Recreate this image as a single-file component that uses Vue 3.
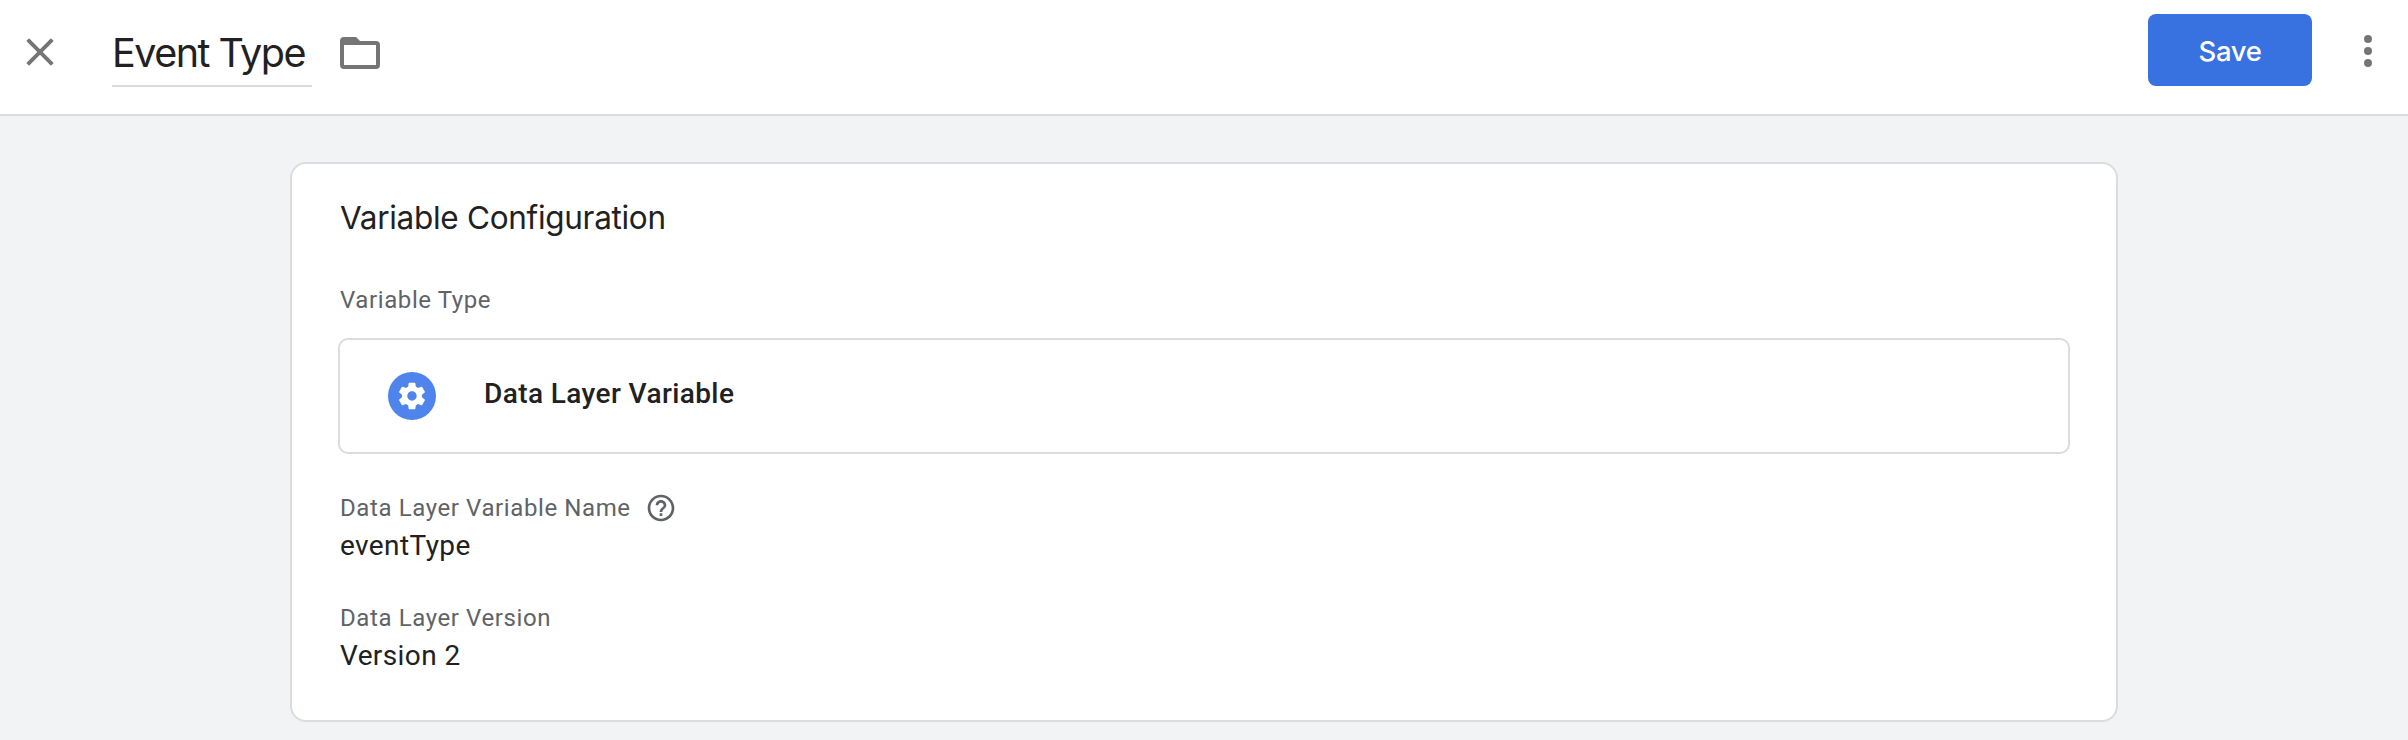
<script setup>
const fields = [
  { label: 'Data Layer Variable Name', value: 'eventType', help: true },
  { label: 'Data Layer Version', value: 'Version 2', help: false },
]
</script>

<template>
  <div class="page">
    <header class="bar">
      <button class="icon-btn close" aria-label="Close">
        <svg width="28" height="28" viewBox="0 0 28 28"><path d="M1.7 1.7 26.3 26.3M26.3 1.7 1.7 26.3" fill="none" stroke="#757575" stroke-width="3.9" /></svg>
      </button>
      <div class="title"><span>Event Type</span></div>
      <button class="icon-btn folder" aria-label="Folder">
        <svg width="40" height="32" viewBox="0 0 40 32"><path fill="#757575" fill-rule="evenodd" d="M4 0h12l4 4h16a4 4 0 0 1 4 4v20a4 4 0 0 1-4 4H4a4 4 0 0 1-4-4V4a4 4 0 0 1 4-4zM4 8v20h32V8z" /></svg>
      </button>
      <button class="save"><span>Save</span></button>
      <button class="icon-btn more" aria-label="More">
        <svg width="8" height="32" viewBox="0 0 8 32"><g fill="#757575"><circle cx="4" cy="4" r="4" /><circle cx="4" cy="16" r="4" /><circle cx="4" cy="28" r="4" /></g></svg>
      </button>
    </header>
    <main class="card">
      <h2><span>Variable Configuration</span></h2>
      <div class="label type-label"><span>Variable Type</span></div>
      <div class="type-box">
        <svg width="48" height="48" viewBox="0 0 48 48">
          <circle cx="24" cy="24" r="24" fill="#5084ed" />
          <path transform="translate(8 8) scale(1.3333)" fill="#fff" d="M19.43 12.98c.04-.32.07-.64.07-.98s-.03-.66-.07-.98l2.11-1.65c.19-.15.24-.42.12-.64l-2-3.46c-.12-.22-.39-.3-.61-.22l-2.49 1c-.52-.4-1.08-.73-1.69-.98l-.38-2.65C14.46 2.18 14.25 2 14 2h-4c-.25 0-.46.18-.49.42l-.38 2.65c-.61.25-1.17.59-1.69.98l-2.49-1c-.23-.09-.49 0-.61.22l-2 3.46c-.13.22-.07.49.12.64l2.11 1.65c-.04.32-.07.65-.07.98s.03.66.07.98l-2.11 1.65c-.19.15-.24.42-.12.64l2 3.46c.12.22.39.3.61.22l2.49-1c.52.4 1.08.73 1.69.98l.38 2.65c.03.24.24.42.49.42h4c.25 0 .46-.18.49-.42l.38-2.65c.61-.25 1.17-.59 1.69-.98l2.49 1c.23.09.49 0 .61-.22l2-3.46c.12-.22.07-.49-.12-.64l-2.11-1.65zM12 15.5c-1.93 0-3.5-1.57-3.5-3.5s1.57-3.5 3.5-3.5 3.5 1.57 3.5 3.5-1.57 3.5-3.5 3.5z" />
        </svg>
        <span class="type-name">Data Layer Variable</span>
      </div>
      <section v-for="f in fields" :key="f.label" class="field">
        <div class="label">
          <span>{{ f.label }}</span>
          <svg v-if="f.help" class="help" width="32" height="32" viewBox="0 0 24 24"><path fill="#5f6368" d="M11 18h2v-2h-2v2zm1-16C6.48 2 2 6.48 2 12s4.48 10 10 10 10-4.480 10-10S17.520 2 12 2zm0 18c-4.410 0-8-3.590-8-8s3.590-8 8-8 8 3.590 8 8-3.590 8-8 8zm0-14c-2.210 0-4 1.790-4 4h2c0-1.100.9-2 2-2s2 .9 2 2c0 2-3 1.750-3 5h2c0-2.250 3-2.500 3-5 0-2.210-1.790-4-4-4z" /></svg>
        </div>
        <div class="value"><span>{{ f.value }}</span></div>
      </section>
    </main>
  </div>
</template>

<style>
body { margin: 0; background: #f1f3f4; }
</style>

<style scoped>
.page {
  box-sizing: border-box;
  width: 100%;
  height: 740px;
  background: #f1f3f4;
  font-family: Roboto, sans-serif;
  color: #212121;
  overflow: hidden;
}
.bar {
  box-sizing: border-box;
  display: flex;
  align-items: flex-start;
  height: 116px;
  padding: 0 36px 0 26px;
  background: #fff;
  border-bottom: 2px solid #dadce0;
}
button { border: 0; padding: 0; margin: 0; background: none; }
.icon-btn svg, .type-box svg, .help { display: block; flex: none; }
.close { margin-top: 38px; }
.title {
  box-sizing: border-box;
  width: 200px;
  height: 87px;
  margin-left: 58px;
  padding-top: 29px;
  border-bottom: 2px solid #dadce0;
  font: 400 39.5px/48px Inter, sans-serif;
  letter-spacing: -1.5px;
  white-space: nowrap;
}
.folder { margin: 37px 0 0 28px; }
.save {
  box-sizing: border-box;
  width: 164px;
  height: 72px;
  margin: 14px 0 0 auto;
  padding-top: 2px;
  border-radius: 8px;
  background: #3871e0;
  color: #fff;
  font: 500 27.5px/70px Inter, sans-serif;
  letter-spacing: -0.4px;
}
.more { margin: 35px 0 0 52px; }
.card {
  box-sizing: border-box;
  width: 1828px;
  height: 560px;
  margin: 46px auto 0;
  padding: 34px 48px 0;
  background: #fff;
  border: 2px solid #dadce0;
  border-radius: 16px;
}
h2 {
  margin: 0;
  font: 400 31.5px/40px Inter, sans-serif;
  letter-spacing: -0.3px;
}
.label {
  display: flex;
  align-items: center;
  height: 32px;
  font-size: 24px;
  line-height: 32px;
  letter-spacing: 0.6px;
  color: #5f6368;
}
.type-label { margin-top: 46px; }
.type-box {
  box-sizing: border-box;
  display: flex;
  align-items: center;
  gap: 48px;
  height: 116px;
  margin: 22px -2px 38px;
  padding: 0 48px;
  border: 2px solid #dadce0;
  border-radius: 10px;
}
.type-name {
  padding-bottom: 5px;
  font-size: 28px;
  font-weight: 500;
  line-height: 36px;
  letter-spacing: 0.4px;
}
.help { margin-left: 14px; }
.value {
  margin-top: 4px;
  font-size: 28px;
  line-height: 36px;
  letter-spacing: 0.4px;
}
.field + .field { margin-top: 38px; }
</style>
